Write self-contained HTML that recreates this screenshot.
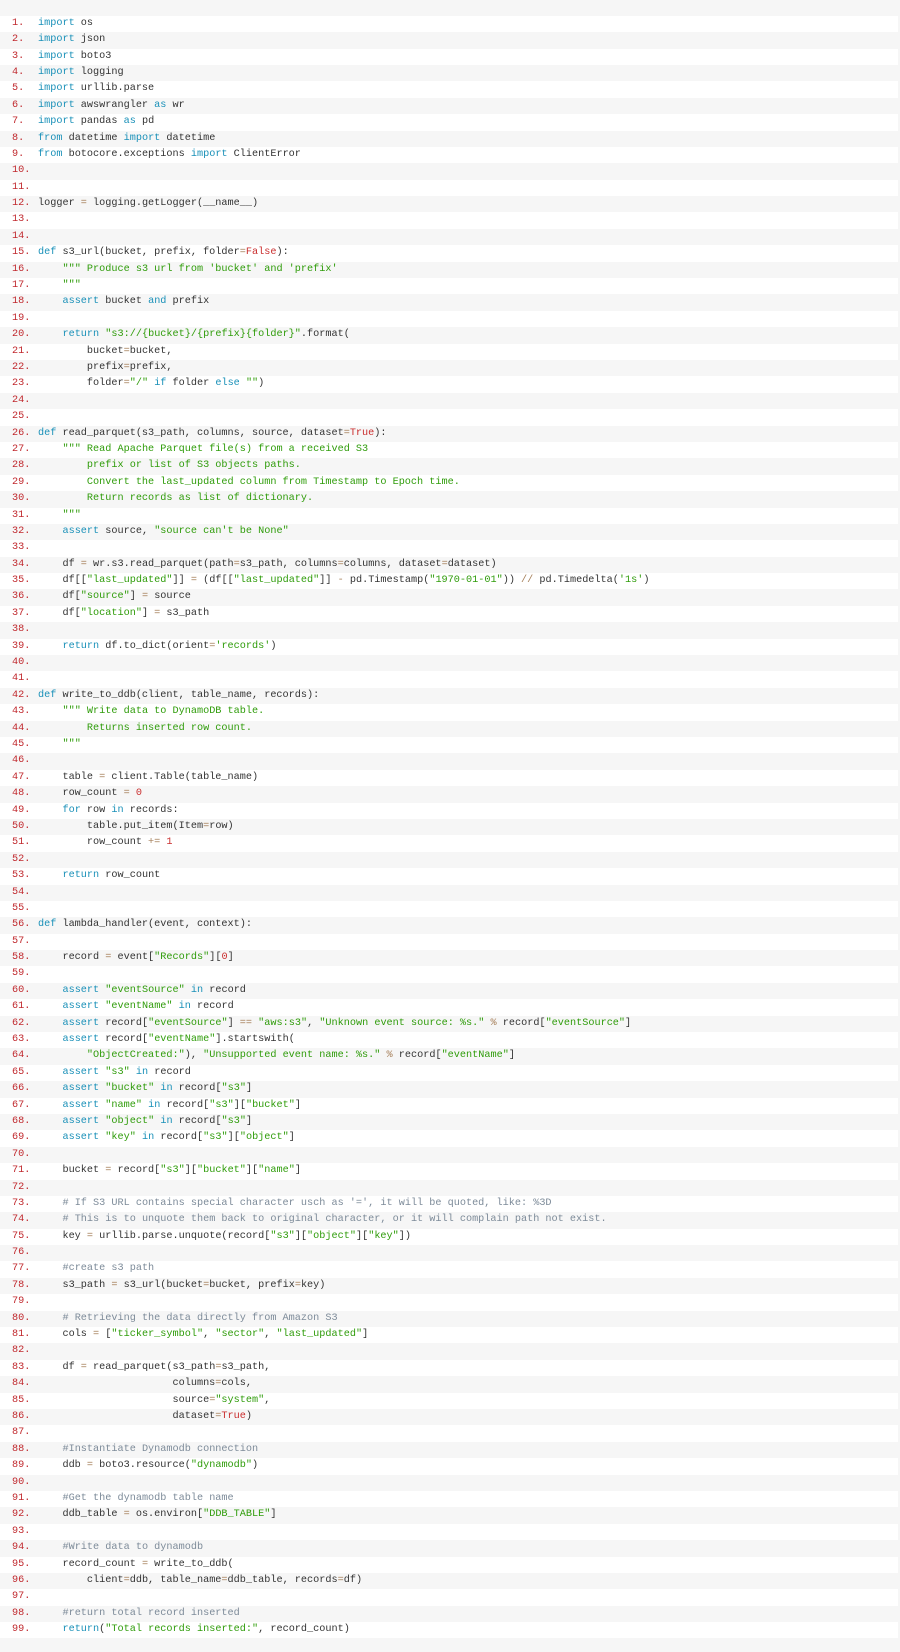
<!DOCTYPE html>
<html><head><meta charset="utf-8"><style>
html,body{margin:0;padding:0;background:#f6f6f6;width:900px;height:1652px;overflow:hidden}
.w{position:absolute;top:15.8px;left:0;width:898px}
.r{height:16.4px;line-height:16.4px;font-family:"Liberation Mono",monospace;font-size:10.2px;color:#333;white-space:pre;position:relative;background:#fff}
.r:nth-child(even){background:#f6f6f6}
.r b{font-weight:normal;position:absolute;left:12px;color:#c0282d}
.r i{font-style:normal;position:absolute;left:38px}
.k{color:#1990b8}.s{color:#2f9c0a}.n{color:#c92c2c}.o{color:#a67f59}.c{color:#7d8b99}
</style></head><body><div class="w">
<div class="r"><b>1.</b><i><span class="k">import</span> os</i></div>
<div class="r"><b>2.</b><i><span class="k">import</span> json</i></div>
<div class="r"><b>3.</b><i><span class="k">import</span> boto3</i></div>
<div class="r"><b>4.</b><i><span class="k">import</span> logging</i></div>
<div class="r"><b>5.</b><i><span class="k">import</span> urllib.parse</i></div>
<div class="r"><b>6.</b><i><span class="k">import</span> awswrangler <span class="k">as</span> wr</i></div>
<div class="r"><b>7.</b><i><span class="k">import</span> pandas <span class="k">as</span> pd</i></div>
<div class="r"><b>8.</b><i><span class="k">from</span> datetime <span class="k">import</span> datetime</i></div>
<div class="r"><b>9.</b><i><span class="k">from</span> botocore.exceptions <span class="k">import</span> ClientError</i></div>
<div class="r"><b>10.</b><i></i></div>
<div class="r"><b>11.</b><i></i></div>
<div class="r"><b>12.</b><i>logger <span class="o">=</span> logging.getLogger(__name__)</i></div>
<div class="r"><b>13.</b><i></i></div>
<div class="r"><b>14.</b><i></i></div>
<div class="r"><b>15.</b><i><span class="k">def</span> s3_url(bucket, prefix, folder<span class="o">=</span><span class="n">False</span>):</i></div>
<div class="r"><b>16.</b><i>    <span class="s">""" Produce s3 url from 'bucket' and 'prefix'</span></i></div>
<div class="r"><b>17.</b><i>    <span class="s">"""</span></i></div>
<div class="r"><b>18.</b><i>    <span class="k">assert</span> bucket <span class="k">and</span> prefix</i></div>
<div class="r"><b>19.</b><i></i></div>
<div class="r"><b>20.</b><i>    <span class="k">return</span> <span class="s">"s3://{bucket}/{prefix}{folder}"</span>.format(</i></div>
<div class="r"><b>21.</b><i>        bucket<span class="o">=</span>bucket,</i></div>
<div class="r"><b>22.</b><i>        prefix<span class="o">=</span>prefix,</i></div>
<div class="r"><b>23.</b><i>        folder<span class="o">=</span><span class="s">"/"</span> <span class="k">if</span> folder <span class="k">else</span> <span class="s">""</span>)</i></div>
<div class="r"><b>24.</b><i></i></div>
<div class="r"><b>25.</b><i></i></div>
<div class="r"><b>26.</b><i><span class="k">def</span> read_parquet(s3_path, columns, source, dataset<span class="o">=</span><span class="n">True</span>):</i></div>
<div class="r"><b>27.</b><i>    <span class="s">""" Read Apache Parquet file(s) from a received S3</span></i></div>
<div class="r"><b>28.</b><i><span class="s">        prefix or list of S3 objects paths.</span></i></div>
<div class="r"><b>29.</b><i><span class="s">        Convert the last_updated column from Timestamp to Epoch time.</span></i></div>
<div class="r"><b>30.</b><i><span class="s">        Return records as list of dictionary.</span></i></div>
<div class="r"><b>31.</b><i>    <span class="s">"""</span></i></div>
<div class="r"><b>32.</b><i>    <span class="k">assert</span> source, <span class="s">"source can't be None"</span></i></div>
<div class="r"><b>33.</b><i></i></div>
<div class="r"><b>34.</b><i>    df <span class="o">=</span> wr.s3.read_parquet(path<span class="o">=</span>s3_path, columns<span class="o">=</span>columns, dataset<span class="o">=</span>dataset)</i></div>
<div class="r"><b>35.</b><i>    df[[<span class="s">"last_updated"</span>]] <span class="o">=</span> (df[[<span class="s">"last_updated"</span>]] <span class="o">-</span> pd.Timestamp(<span class="s">"1970-01-01"</span>)) <span class="o">//</span> pd.Timedelta(<span class="s">'1s'</span>)</i></div>
<div class="r"><b>36.</b><i>    df[<span class="s">"source"</span>] <span class="o">=</span> source</i></div>
<div class="r"><b>37.</b><i>    df[<span class="s">"location"</span>] <span class="o">=</span> s3_path</i></div>
<div class="r"><b>38.</b><i></i></div>
<div class="r"><b>39.</b><i>    <span class="k">return</span> df.to_dict(orient<span class="o">=</span><span class="s">'records'</span>)</i></div>
<div class="r"><b>40.</b><i></i></div>
<div class="r"><b>41.</b><i></i></div>
<div class="r"><b>42.</b><i><span class="k">def</span> write_to_ddb(client, table_name, records):</i></div>
<div class="r"><b>43.</b><i>    <span class="s">""" Write data to DynamoDB table.</span></i></div>
<div class="r"><b>44.</b><i><span class="s">        Returns inserted row count.</span></i></div>
<div class="r"><b>45.</b><i>    <span class="s">"""</span></i></div>
<div class="r"><b>46.</b><i></i></div>
<div class="r"><b>47.</b><i>    table <span class="o">=</span> client.Table(table_name)</i></div>
<div class="r"><b>48.</b><i>    row_count <span class="o">=</span> <span class="n">0</span></i></div>
<div class="r"><b>49.</b><i>    <span class="k">for</span> row <span class="k">in</span> records:</i></div>
<div class="r"><b>50.</b><i>        table.put_item(Item<span class="o">=</span>row)</i></div>
<div class="r"><b>51.</b><i>        row_count <span class="o">+=</span> <span class="n">1</span></i></div>
<div class="r"><b>52.</b><i></i></div>
<div class="r"><b>53.</b><i>    <span class="k">return</span> row_count</i></div>
<div class="r"><b>54.</b><i></i></div>
<div class="r"><b>55.</b><i></i></div>
<div class="r"><b>56.</b><i><span class="k">def</span> lambda_handler(event, context):</i></div>
<div class="r"><b>57.</b><i></i></div>
<div class="r"><b>58.</b><i>    record <span class="o">=</span> event[<span class="s">"Records"</span>][<span class="n">0</span>]</i></div>
<div class="r"><b>59.</b><i></i></div>
<div class="r"><b>60.</b><i>    <span class="k">assert</span> <span class="s">"eventSource"</span> <span class="k">in</span> record</i></div>
<div class="r"><b>61.</b><i>    <span class="k">assert</span> <span class="s">"eventName"</span> <span class="k">in</span> record</i></div>
<div class="r"><b>62.</b><i>    <span class="k">assert</span> record[<span class="s">"eventSource"</span>] <span class="o">==</span> <span class="s">"aws:s3"</span>, <span class="s">"Unknown event source: %s."</span> <span class="o">%</span> record[<span class="s">"eventSource"</span>]</i></div>
<div class="r"><b>63.</b><i>    <span class="k">assert</span> record[<span class="s">"eventName"</span>].startswith(</i></div>
<div class="r"><b>64.</b><i>        <span class="s">"ObjectCreated:"</span>), <span class="s">"Unsupported event name: %s."</span> <span class="o">%</span> record[<span class="s">"eventName"</span>]</i></div>
<div class="r"><b>65.</b><i>    <span class="k">assert</span> <span class="s">"s3"</span> <span class="k">in</span> record</i></div>
<div class="r"><b>66.</b><i>    <span class="k">assert</span> <span class="s">"bucket"</span> <span class="k">in</span> record[<span class="s">"s3"</span>]</i></div>
<div class="r"><b>67.</b><i>    <span class="k">assert</span> <span class="s">"name"</span> <span class="k">in</span> record[<span class="s">"s3"</span>][<span class="s">"bucket"</span>]</i></div>
<div class="r"><b>68.</b><i>    <span class="k">assert</span> <span class="s">"object"</span> <span class="k">in</span> record[<span class="s">"s3"</span>]</i></div>
<div class="r"><b>69.</b><i>    <span class="k">assert</span> <span class="s">"key"</span> <span class="k">in</span> record[<span class="s">"s3"</span>][<span class="s">"object"</span>]</i></div>
<div class="r"><b>70.</b><i></i></div>
<div class="r"><b>71.</b><i>    bucket <span class="o">=</span> record[<span class="s">"s3"</span>][<span class="s">"bucket"</span>][<span class="s">"name"</span>]</i></div>
<div class="r"><b>72.</b><i></i></div>
<div class="r"><b>73.</b><i>    <span class="c"># If S3 URL contains special character usch as '=', it will be quoted, like: %3D</span></i></div>
<div class="r"><b>74.</b><i>    <span class="c"># This is to unquote them back to original character, or it will complain path not exist.</span></i></div>
<div class="r"><b>75.</b><i>    key <span class="o">=</span> urllib.parse.unquote(record[<span class="s">"s3"</span>][<span class="s">"object"</span>][<span class="s">"key"</span>])</i></div>
<div class="r"><b>76.</b><i></i></div>
<div class="r"><b>77.</b><i>    <span class="c">#create s3 path</span></i></div>
<div class="r"><b>78.</b><i>    s3_path <span class="o">=</span> s3_url(bucket<span class="o">=</span>bucket, prefix<span class="o">=</span>key)</i></div>
<div class="r"><b>79.</b><i></i></div>
<div class="r"><b>80.</b><i>    <span class="c"># Retrieving the data directly from Amazon S3</span></i></div>
<div class="r"><b>81.</b><i>    cols <span class="o">=</span> [<span class="s">"ticker_symbol"</span>, <span class="s">"sector"</span>, <span class="s">"last_updated"</span>]</i></div>
<div class="r"><b>82.</b><i></i></div>
<div class="r"><b>83.</b><i>    df <span class="o">=</span> read_parquet(s3_path<span class="o">=</span>s3_path,</i></div>
<div class="r"><b>84.</b><i>                      columns<span class="o">=</span>cols,</i></div>
<div class="r"><b>85.</b><i>                      source<span class="o">=</span><span class="s">"system"</span>,</i></div>
<div class="r"><b>86.</b><i>                      dataset<span class="o">=</span><span class="n">True</span>)</i></div>
<div class="r"><b>87.</b><i></i></div>
<div class="r"><b>88.</b><i>    <span class="c">#Instantiate Dynamodb connection</span></i></div>
<div class="r"><b>89.</b><i>    ddb <span class="o">=</span> boto3.resource(<span class="s">"dynamodb"</span>)</i></div>
<div class="r"><b>90.</b><i></i></div>
<div class="r"><b>91.</b><i>    <span class="c">#Get the dynamodb table name</span></i></div>
<div class="r"><b>92.</b><i>    ddb_table <span class="o">=</span> os.environ[<span class="s">"DDB_TABLE"</span>]</i></div>
<div class="r"><b>93.</b><i></i></div>
<div class="r"><b>94.</b><i>    <span class="c">#Write data to dynamodb</span></i></div>
<div class="r"><b>95.</b><i>    record_count <span class="o">=</span> write_to_ddb(</i></div>
<div class="r"><b>96.</b><i>        client<span class="o">=</span>ddb, table_name<span class="o">=</span>ddb_table, records<span class="o">=</span>df)</i></div>
<div class="r"><b>97.</b><i></i></div>
<div class="r"><b>98.</b><i>    <span class="c">#return total record inserted</span></i></div>
<div class="r"><b>99.</b><i>    <span class="k">return</span>(<span class="s">"Total records inserted:"</span>, record_count)</i></div>
</div></body></html>
